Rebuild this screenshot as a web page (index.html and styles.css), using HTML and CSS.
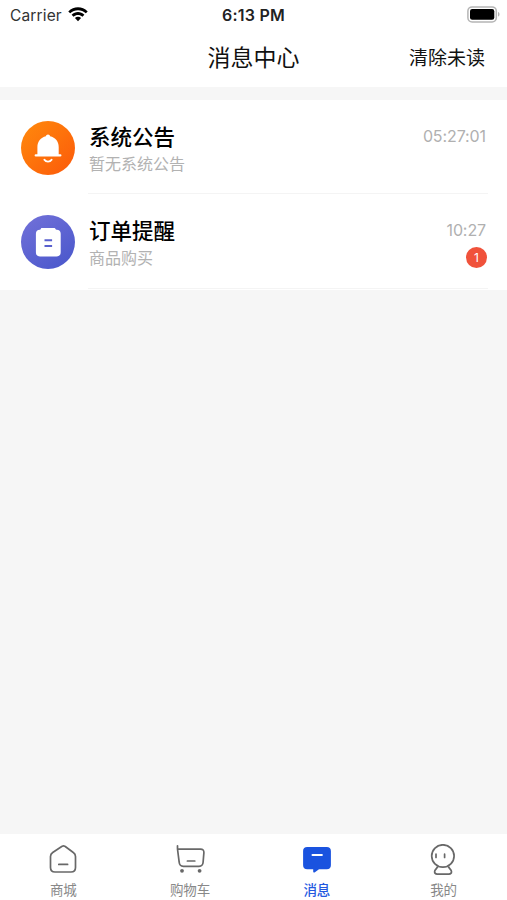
FILE: index.html
```html
<!DOCTYPE html>
<html lang="zh-CN">
<head>
<meta charset="utf-8">
<title>消息中心</title>
<link rel="stylesheet" href="styles.css">
</head>
<body>
<div class="app">
  <header class="top">
    <div class="status">
      <div class="carrier"><span>Carrier</span>
        <svg width="20" height="15" viewBox="0 0 20 15"><path d="M0.3 4.4C5.8-1 14.2-1 19.7 4.4L17.8 6.3C13.4 2.1 6.600 2.100 2.200 6.300Z"/><path d="M3.600 7.700C7.200 4.200 12.800 4.200 16.400 7.700L14.400 9.700C11.900 7.300 8.100 7.300 5.600 9.700Z"/><path d="M6.900 11C8.700 9.400 11.300 9.400 13.100 11L10 14.200Z"/></svg>
      </div>
      <div class="clock">6:13 PM</div>
      <svg class="battery" width="33" height="17" viewBox="0 0 33 17"><rect x=".9" y=".9" width="28.4" height="15" rx="4.2" fill="none" stroke="#b5b5b5" stroke-width="1.5"/><rect x="3" y="3.1" width="24.3" height="10.6" rx="2.2"/><path d="M31 6v4.6c2-.7 2-3.9 0-4.6Z" fill="#b5b5b5"/></svg>
    </div>
    <div class="nav"><h1>消息中心</h1><span class="clear">清除未读</span></div>
  </header>
  <main class="list">
    <section class="item">
      <svg class="avatar" width="54" height="54" viewBox="0 0 54 54"><defs><linearGradient id="orange" x1="0" y1="0" x2="1" y2="1"><stop offset="0" stop-color="#ff8a0c"/><stop offset="1" stop-color="#fc590a"/></linearGradient></defs><circle cx="27" cy="27" r="27" fill="url(#orange)"/><path d="M27 13.400c1.200 0 1.800.7 2.100 1.800 5.300 1.300 8.600 5.400 8.600 10.800v7.200h1.600c1.600 0 1.600 2.400 0 2.400H14.800c-1.600 0-1.600-2.400 0-2.400h1.600V26c0-5.400 3.300-9.500 8.500-10.800.3-1.100.9-1.800 2.100-1.800Z" fill="#fff"/><path d="M23.400 38.700c1.700 2.500 5.500 2.500 7.200 0" fill="none" stroke="#fff" stroke-width="1.9" stroke-linecap="round"/></svg>
      <div class="body">
        <div class="text"><h2>系统公告</h2><p>暂无系统公告</p></div>
        <div class="meta"><time>05:27:01</time></div>
      </div>
    </section>
    <section class="item">
      <svg class="avatar" width="54" height="54" viewBox="0 0 54 54"><defs><linearGradient id="violet" x1=".1" y1="0" x2=".8" y2="1"><stop offset="0" stop-color="#7170d8"/><stop offset="1" stop-color="#4b58cc"/></linearGradient></defs><circle cx="27" cy="27" r="27" fill="url(#violet)"/><path d="M20.500 13h13c.9 0 1.100 1.800 2 1.800h.2c2.500 0 4 1.500 4 4v18.400c0 2.800-1.500 4.200-4.200 4.200H19.100c-2.700 0-4.200-1.400-4.200-4.200V18.800c0-2.500 1.500-4 4-4 .9 0 .9-1.800 1.600-1.800Z" fill="#fff"/><path d="M23.500 25.300h7.600M23.500 31h7.600" stroke="#5960ce" stroke-width="2"/></svg>
      <div class="body">
        <div class="text"><h2>订单提醒</h2><p>商品购买</p></div>
        <div class="meta"><time>10:27</time><span class="badge">1</span></div>
      </div>
    </section>
  </main>
  <footer class="tabs">
    <div class="tab"><svg width="32" height="32" viewBox="-1 0 32 32"><path d="M14.100 2.300 4.700 8.500C3.300 9.400 2.500 10.800 2.500 12.400V23.500c0 3 1.600 4.500 4.500 4.500h16c2.900 0 4.500-1.500 4.500-4.500V12.400c0-1.600-.8-3-2.200-3.900l-8.400-6.200c-.9-.7-1.900-.7-2.800 0Z"/><path d="M10.800 20.400h8.800" stroke-linecap="round"/></svg><span>商城</span></div>
    <div class="tab"><svg width="32" height="32" viewBox="-1 0 32 32"><path d="M2.500 1.800v3.300H25.500c2.400 0 3.500 1.200 3.400 3.500l-.8 9.700c-.2 2.800-1.500 4-4.100 4H8.400c-2.800 0-4-1.200-4.200-4L2.500 5" stroke-linecap="round"/><path d="M12.400 17h7.400" stroke-linecap="round"/><circle class="solid" cx="7" cy="26.800" r="1.900"/><circle class="solid" cx="24.600" cy="26.800" r="1.900"/></svg><span>购物车</span></div>
    <div class="tab active"><svg width="32" height="32" viewBox="0 0 32 32"><path class="solid" d="M6.200 3H25.800c2.600 0 4.100 1.500 4.100 4.100v14.100c0 2.600-1.500 4.100-4.100 4.100H18l-4.100 3c-.9.6-1.700.2-1.700-.9v-2.100h-6c-2.600 0-4.100-1.500-4.100-4.100V7.100C2.100 4.500 3.600 3 6.200 3Z"/><path class="mark" d="M11.500 11h9.400"/></svg><span>消息</span></div>
    <div class="tab"><svg width="32" height="32" viewBox="1 0 32 32"><circle cx="15.900" cy="12" r="11.200"/><path d="M9 10.200v3.300M17.600 10.200v3.300" stroke-linecap="round"/><path d="M10.800 22.400c-.9 2.300-3.200 3.300-3.200 5.400 0 1.600.9 2.300 2.500 2.300h11.900c1.600 0 2.500-.7 2.500-2.300 0-2.100-2.300-3.100-3.200-5.400"/></svg><span>我的</span></div>
  </footer>
</div>
</body>
</html>
```
FILE: styles.css
```css
* { box-sizing: border-box; }
body {
  margin: 0;
  background: #f6f6f6;
  font-family: Inter, "Noto Sans CJK SC", sans-serif;
  color: #111;
}
h1, h2, p { margin: 0; }
svg { display: block; flex: none; }
.app { height: 900px; display: flex; flex-direction: column; }
.top { height: 87px; background: #fff; }
.status {
  height: 30px;
  display: grid;
  grid-template-columns: 1fr auto 1fr;
  align-items: center;
  padding: 0 7px 0 10px;
}
.carrier { display: flex; align-items: center; gap: 6px; font-size: 15.5px; letter-spacing: .15px; color: #333; }
.carrier svg { margin-top: -1px; }
.clock { font-size: 16px; font-weight: 600; letter-spacing: .25px; margin-right: 3px; color: #222; }
.battery { justify-self: end; margin-top: -1px; }
.nav {
  height: 57px;
  display: grid;
  grid-template-columns: 1fr auto 1fr;
  align-items: center;
  padding: 0 22px 2px;
}
.nav h1 { grid-column: 2; font-size: 23px; line-height: 32px; font-weight: 400; }
.clear { justify-self: end; font-size: 19px; line-height: 28px; margin-top: 3px; }
.list { margin-top: 13px; padding-bottom: 1px; background: #fff; }
.item { height: 94px; display: flex; padding: 0 19px 0 21px; }
.item + .item { height: 95px; }
.avatar { margin-top: 21px; }
.body {
  flex: 1;
  display: flex;
  justify-content: space-between;
  margin-left: 13px;
  padding: 21px 1px 0;
  border-bottom: 1px solid #f4f4f4;
}
.text h2 { font-size: 21.5px; line-height: 32px; font-weight: 500; color: #000; }
.text p { font-size: 16px; line-height: 22px; color: #b2b2b2; }
.meta { display: flex; flex-direction: column; align-items: flex-end; color: #b0b0b0; }
.meta time { font-size: 16px; line-height: 31px; letter-spacing: -.1px; padding-right: 1px; }
.badge {
  width: 21px;
  height: 21px;
  margin-top: 1px;
  border-radius: 50%;
  background: #f0523b;
  color: #fff;
  font-size: 12px;
  line-height: 21px;
  text-align: center;
}
.tabs { height: 66px; margin-top: auto; display: flex; background: #fff; }
.tab { flex: 1; display: flex; flex-direction: column; align-items: center; padding-top: 10px; color: #888; }
.tab svg { fill: none; stroke: #686868; stroke-width: 1.7; stroke-linejoin: round; }
.tab .solid { fill: #686868; stroke: none; }
.tab span { font-size: 13.5px; line-height: 20px; margin-top: 4px; }
.active { color: #2459df; }
.active .solid { fill: #1a53df; }
.tab .mark { stroke: #fff; stroke-width: 2; stroke-linecap: round; }
.active span { font-weight: 500; }
```
